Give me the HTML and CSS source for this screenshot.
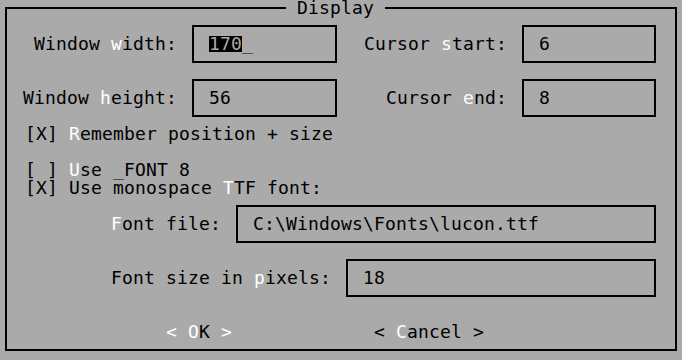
FILE: index.html
```html
<!DOCTYPE html>
<html lang="en">
<head>
<meta charset="UTF-8" />
<meta name="viewport" content="width=device-width, initial-scale=1" />
<title>Display</title>
<link rel="stylesheet" href="styles.css">
</head>
<body>

<div class="dialog">
  <div class="dialog-title">Display</div>

  <!-- Taille de la fenetre / curseur -->
  <div class="row row-top">
    <label class="pair-label">Window <span class="hot">w</span>idth:</label>
    <div class="field field-left"><span class="sel">170</span>_</div>
    <label class="pair-label">Cursor <span class="hot">s</span>tart:</label>
    <div class="field field-right">6</div>
  </div>
  <div class="row row-top">
    <label class="pair-label">Window <span class="hot">h</span>eight:</label>
    <div class="field field-left">56</div>
    <label class="pair-label">Cursor <span class="hot">e</span>nd:</label>
    <div class="field field-right">8</div>
  </div>

  <!-- Cases a cocher -->
  <div class="check check-first">[X] <span class="hot">R</span>emember position + size</div>
  <div class="check check-gap">[ ] <span class="hot">U</span>se _FONT 8</div>
  <div class="check">[X] Use monospace <span class="hot">T</span>TF font:</div>

  <!-- Police -->
  <div class="row font-row">
    <label class="font-label"><span class="hot">F</span>ont file:</label>
    <div class="field field-grow">C:\Windows\Fonts\lucon.ttf</div>
  </div>
  <div class="row font-row">
    <label class="font-label">Font size in <span class="hot">p</span>ixels:</label>
    <div class="field field-grow">18</div>
  </div>

  <!-- Boutons -->
  <div class="buttons">
    <span class="btn"><span class="hot">&lt;</span> <span class="hot">O</span>K <span class="hot">&gt;</span></span>
    <span class="btn">&lt; <span class="hot">C</span>ancel &gt;</span>
  </div>
</div>

</body>
</html>
```

FILE: styles.css
```css
body {
  margin: 0; background: #aaa; color: #000;
  font-family: "DejaVu Sans Mono", "Liberation Mono", monospace;
  font-size: 18px; line-height: 18px; letter-spacing: 0.16px;
}
.hot { color: #fff; }

.dialog {
  position: relative; box-sizing: border-box; height: 344px;
  margin: 7px 5px 0; padding-top: 16px; border: 2px solid #000;
}
.dialog-title {
  position: absolute; top: -10px; left: 279px; padding: 0 11px; background: #aaa;
}

.row { display: flex; align-items: center; }
.row-top + .row-top { margin-top: 16px; }
.pair-label { width: 170px; margin-right: 15px; text-align: right; }

.field {
  box-sizing: border-box; height: 38px; padding: 8px 0 8px 15px;
  border: 2px solid #000; white-space: pre;
}
.field-left { width: 145px; }
.field-right { width: 134px; }
.field-grow { flex: 1; }
.sel { display: inline-block; line-height: 16px; background: #000; color: #aaa; }

.check { padding-left: 18px; white-space: pre; }
.check-first { margin-top: 8px; }
.check-gap { margin-top: 18px; }

.font-row { margin-top: 8px; padding-left: 104px; padding-right: 19px; }
.font-row + .font-row { margin-top: 16px; }
.font-label { margin-right: 15px; white-space: pre; }

.buttons { display: flex; gap: 142px; margin-top: 26px; padding-left: 159px; white-space: pre; }
```
